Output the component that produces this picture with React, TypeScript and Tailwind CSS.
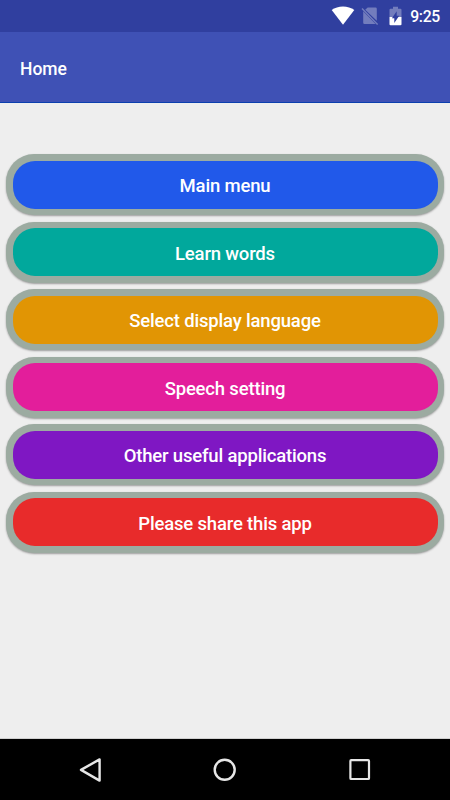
const menuItems = [
  { label: 'Main menu', color: 'bg-[#2159ea]' },
  { label: 'Learn words', color: 'bg-[#01a89c]' },
  { label: 'Select display language', color: 'bg-[#e19504]' },
  { label: 'Speech setting', color: 'bg-[#e31e9b]' },
  { label: 'Other useful applications', color: 'bg-[#7f17c3]' },
  { label: 'Please share this app', color: 'bg-[#e82b2b]' },
];

function StatusBar() {
  return (
    <div className="flex h-8 shrink-0 items-center justify-end bg-[#303f9f] pr-[10px] text-white">
      <svg width="24" height="20" viewBox="0 0 24 20" className="mr-[6px]">
        <path d="M0.7 4.1C6.7 -0.8 17.3 -0.8 23.3 4.1L12 18.8Z" fill="currentColor" />
      </svg>
      <svg width="18" height="20" viewBox="0 0 18 20" className="mr-[10px]">
        <path
          d="M6.7 1.5H14.5Q15.8 1.5 15.8 2.8V14.8L4.2 3.8ZM2.2 5.3L14.6 18H3.5Q2.2 18 2.2 16.7Z"
          fill="#737dbd"
        />
        <path d="M1 2.6L16.6 18.6" stroke="#737dbd" strokeWidth="1.4" />
      </svg>
      <svg width="13" height="20" viewBox="0 0 13 20" className="mr-[8px]">
        <path
          d="M4 0.7H9V2.7H11.4Q12.5 2.7 12.5 3.8V11H0.5V3.8Q0.5 2.7 1.6 2.7H4Z"
          fill="#737dbd"
        />
        <path
          d="M0.5 11H12.5V18.2Q12.5 19.3 11.4 19.3H1.6Q0.5 19.3 0.5 18.2Z"
          fill="currentColor"
        />
        <path d="M7.7 5.2V9.8H10.2L5.3 17V12.3H2.9Z" fill="#303f9f" />
      </svg>
      <span className="pt-px text-[15.75px] leading-8 font-medium tracking-[-0.3px]">
        9:25
      </span>
    </div>
  );
}

function NavBar() {
  return (
    <div className="flex h-[61px] shrink-0 items-center justify-between bg-black px-[78px] text-[#e6e6e6]">
      <svg
        width="24"
        height="26"
        viewBox="0 0 24 26"
        fill="none"
        stroke="currentColor"
        strokeWidth="2.4"
        strokeLinejoin="round"
      >
        <path d="M3 12.9L21.6 2.4V23.6Z" />
      </svg>
      <svg
        width="24"
        height="26"
        viewBox="0 0 24 26"
        fill="none"
        stroke="currentColor"
        strokeWidth="2.4"
      >
        <circle cx="11.7" cy="12.8" r="10" />
      </svg>
      <svg
        width="24"
        height="26"
        viewBox="0 0 24 26"
        fill="none"
        stroke="currentColor"
        strokeWidth="2.2"
      >
        <rect x="2.4" y="3.2" width="18.6" height="18.8" rx="0.8" />
      </svg>
    </div>
  );
}

export default function App() {
  return (
    <div className="flex h-[800px] w-[450px] flex-col overflow-hidden bg-[#eeeeee] font-[Roboto,sans-serif]">
      <StatusBar />
      <header className="flex h-[71px] shrink-0 items-center border-b border-[#0b3fae] bg-[#3f51b5] pt-[5px] pl-5">
        <h1 className="text-[17.5px] font-medium text-white">Home</h1>
      </header>
      <main className="flex grow flex-col gap-[6.5px] border-b border-[#cfcfcf] px-[6px] pt-[51.4px]">
        {menuItems.map((item) => (
          <button
            key={item.label}
            type="button"
            className="h-[61px] rounded-[28px] bg-[#9caba1] p-[6.5px] shadow-[0_1px_2px_rgba(0,0,0,0.35)]"
          >
            <span
              className={`flex h-full items-center justify-center rounded-[22px] pt-[4px] text-[18.5px] font-medium tracking-[-0.18px] text-white ${item.color}`}
            >
              {item.label}
            </span>
          </button>
        ))}
      </main>
      <NavBar />
    </div>
  );
}
